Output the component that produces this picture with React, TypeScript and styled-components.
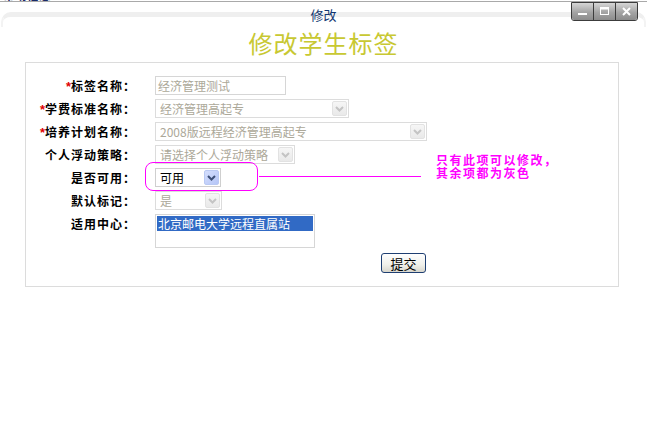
import React from "react";
import styled, { createGlobalStyle } from "styled-components";

const GlobalStyle = createGlobalStyle`
    html, body {
        margin: 0;
        padding: 0;
        background: #ffffff;
    }
    body {
        font-family: "Noto Sans CJK SC", "Liberation Sans", sans-serif;
        font-size: 12px;
        color: #000;
    }
`;

const Page = styled.div`
    width: 647px;
    height: 421px;
    overflow: hidden;
    position: relative;
    background: #fff;
`;

const Crumb = styled.div`
    position: absolute;
    top: 0;
    left: 3px;
    height: 1px;
    overflow: hidden;
    font-size: 12px;
    line-height: 12px;
    color: #1a2a66;
    font-weight: bold;

    span {
        display: block;
        margin-top: -11px;
    }
`;

const TitleBar = styled.div`
    position: relative;
    height: 26px;
    margin-top: 1px;
    border-top: 1px solid #a9a9a9;
    text-align: center;

    &::before {
        content: "";
        position: absolute;
        top: 10px;
        left: 1px;
        right: 1px;
        height: 10px;
        border-top: 5px solid #efefef;
        border-left: 2px solid #f3f3f3;
        border-right: 2px solid #f3f3f3;
        border-radius: 10px 10px 0 0;
    }
`;

const Title = styled.span`
    position: relative;
    display: inline-block;
    padding-top: 5px;
    font-size: 13px;
    line-height: 16px;
    color: #0f3570;
`;

const WindowButtons = styled.div`
    position: absolute;
    top: 0;
    right: 9px;
    display: flex;
    border: 1px solid #3c3c3c;
    border-radius: 0 0 3px 3px;
    overflow: hidden;
`;

const WinButton = styled.div`
    width: 21px;
    height: 17px;
    display: flex;
    align-items: center;
    justify-content: center;
    background: linear-gradient(#d6d6d6, #a4a4a4 55%, #8c8c8c);
    & + & {
        border-left: 1px solid #3c3c3c;
    }
`;

const Heading = styled.h1`
    margin: 0;
    height: 29px;
    font-size: 24px;
    line-height: 29px;
    font-weight: 400;
    letter-spacing: 1px;
    text-align: center;
    color: #c8c832;
`;

const FormBox = styled.div`
    margin: 5px 0 0 25px;
    width: 592px;
    height: 210px;
    padding-top: 13px;
    border: 1px solid #dcdcdc;
    display: grid;
    grid-template-columns: 106px auto;
    grid-auto-rows: min-content;
    align-content: start;
    column-gap: 23px;
    row-gap: 4px;
`;

const Label = styled.div`
    height: 19px;
    text-align: right;
    font-weight: bold;
    font-size: 12px;
    line-height: 19px;
    letter-spacing: 1px;
    white-space: nowrap;
    margin-right: -4px;
`;

const Star = styled.span`
    color: #e00000;
    font-family: "Liberation Sans", sans-serif;
    font-size: 13px;
    line-height: 12px;
    letter-spacing: 0;
`;

const Field = styled.div`
    position: relative;
    display: flex;
    align-items: flex-start;
    min-height: 19px;
`;

const TextBox = styled.div<{ $width: number }>`
    box-sizing: border-box;
    width: ${(p) => p.$width}px;
    height: 19px;
    border: 1px solid #d6d6d6;
    padding-left: 2px;
    line-height: 17px;
    color: #aca899;
`;

const SelectBox = styled.div<{ $width: number; $disabled?: boolean }>`
    box-sizing: border-box;
    width: ${(p) => p.$width}px;
    height: 19px;
    border: 1px solid ${(p) => (p.$disabled ? "#dcdcdc" : "#cfcfcf")};
    display: flex;
    align-items: center;
    justify-content: space-between;
    padding: 0 1px 0 4px;
    color: ${(p) => (p.$disabled ? "#aca899" : "#000")};
    line-height: 17px;
    white-space: nowrap;
    overflow: hidden;
`;

const Arrow = styled.div<{ $disabled?: boolean }>`
    flex: none;
    width: 15px;
    height: 15px;
    display: flex;
    align-items: center;
    justify-content: center;
    border-radius: 2px;
    border: 1px solid ${(p) => (p.$disabled ? "#e2e2e2" : "#b9c9f3")};
    box-sizing: border-box;
    background: ${(p) =>
        p.$disabled
            ? "linear-gradient(#f6f6f6, #e9e9e9)"
            : "linear-gradient(135deg, #d4defd, #b5c6f7)"};
`;

const ListBox = styled.div`
    box-sizing: border-box;
    width: 160px;
    height: 34px;
    border: 1px solid #d6d6d6;
    padding: 1px;
`;

const ListItem = styled.div<{ $selected?: boolean }>`
    height: 15px;
    line-height: 15px;
    padding-left: 1px;
    background: ${(p) => (p.$selected ? "#316ac5" : "transparent")};
    color: ${(p) => (p.$selected ? "#fff" : "#000")};
    white-space: nowrap;
`;

const Ring = styled.div`
    position: absolute;
    left: -10px;
    top: -6px;
    width: 111px;
    height: 27px;
    border: 1px solid #ff00ff;
    border-radius: 8px;
`;

const Pointer = styled.div`
    position: absolute;
    left: 104px;
    top: 8px;
    width: 162px;
    height: 1px;
    background: #ff00ff;
`;

const Note = styled.div`
    position: absolute;
    left: 281px;
    top: -15px;
    font-weight: bold;
    font-size: 12px;
    line-height: 13px;
    letter-spacing: 1.5px;
    color: #ff00ff;
    white-space: nowrap;
`;

const ButtonRow = styled.div`
    grid-column: 2;
    padding: 1px 0 0 226px;
`;

const SubmitButton = styled.button`
    box-sizing: border-box;
    width: 45px;
    height: 20px;
    padding: 0;
    border: 1px solid #1f3f72;
    border-radius: 3px;
    background: linear-gradient(#ffffff, #f0f0ea 60%, #d8d6cc);
    font-family: "Noto Sans CJK SC", sans-serif;
    font-size: 13px;
    line-height: 17px;
    color: #000;
`;

const Chevron = ({ color }: { color: string }) => (
    <svg width="9" height="6" viewBox="0 0 9 6">
        <polyline
            points="1,1 4.5,4.5 8,1"
            fill="none"
            stroke={color}
            strokeWidth="2"
        />
    </svg>
);

const Select = ({
    width,
    value,
    disabled,
}: {
    width: number;
    value: string;
    disabled?: boolean;
}) => (
    <SelectBox $width={width} $disabled={disabled}>
        <span>{value}</span>
        <Arrow $disabled={disabled}>
            <Chevron color={disabled ? "#c4c4c4" : "#3d5078"} />
        </Arrow>
    </SelectBox>
);

export default function App() {
    return (
        <Page>
            <GlobalStyle />
            <Crumb>
                <span>帮助信息</span>
            </Crumb>
            <TitleBar>
                <Title>修改</Title>
                <WindowButtons>
                    <WinButton>
                        <svg width="11" height="11" viewBox="0 0 11 11">
                            <rect x="1" y="7" width="9" height="2" fill="#fff" />
                        </svg>
                    </WinButton>
                    <WinButton>
                        <svg width="11" height="11" viewBox="0 0 11 11">
                            <rect x="1.5" y="1.5" width="8" height="7" fill="none" stroke="#fff" strokeWidth="1" />
                            <rect x="1.5" y="1.5" width="8" height="2" fill="#fff" />
                        </svg>
                    </WinButton>
                    <WinButton>
                        <svg width="11" height="11" viewBox="0 0 11 11">
                            <path d="M2 2 L9 9 M9 2 L2 9" stroke="#fff" strokeWidth="2" />
                        </svg>
                    </WinButton>
                </WindowButtons>
            </TitleBar>
            <Heading>修改学生标签</Heading>
            <FormBox>
                <Label>
                    <Star>*</Star>标签名称：
                </Label>
                <Field>
                    <TextBox $width={131}>经济管理测试</TextBox>
                </Field>

                <Label>
                    <Star>*</Star>学费标准名称：
                </Label>
                <Field>
                    <Select width={194} value="经济管理高起专" disabled />
                </Field>

                <Label>
                    <Star>*</Star>培养计划名称：
                </Label>
                <Field>
                    <Select width={272} value="2008版远程经济管理高起专" disabled />
                </Field>

                <Label>个人浮动策略：</Label>
                <Field>
                    <Select width={140} value="请选择个人浮动策略" disabled />
                </Field>

                <Label>是否可用：</Label>
                <Field>
                    <Select width={66} value="可用" />
                    <Ring />
                    <Pointer />
                    <Note>
                        只有此项可以修改，
                        <br />
                        其余项都为灰色
                    </Note>
                </Field>

                <Label>默认标记：</Label>
                <Field>
                    <Select width={67} value="是" disabled />
                </Field>

                <Label>适用中心：</Label>
                <Field>
                    <ListBox>
                        <ListItem $selected>北京邮电大学远程直属站</ListItem>
                    </ListBox>
                </Field>

                <ButtonRow>
                    <SubmitButton>提交</SubmitButton>
                </ButtonRow>
            </FormBox>
        </Page>
    );
}
